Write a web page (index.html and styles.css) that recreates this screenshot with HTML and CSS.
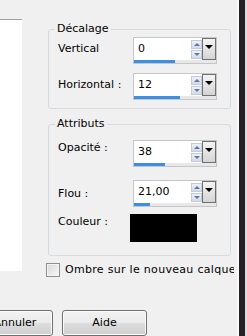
FILE: index.html
```html
<!DOCTYPE html>
<html lang="fr">
<head>
    <meta charset="UTF-8">
    <meta name="viewport" content="width=device-width, initial-scale=1.0">
    <title>Ombre portée</title>
    <link rel="stylesheet" href="styles.css">
</head>
<body>

    <div class="window">
        <div class="dialog">
            <div class="content">
                <!-- Aperçu -->
                <div class="preview"></div>

                <div class="settings">
                    <!-- Décalage -->
                    <fieldset class="group group-offset">
                        <legend>Décalage</legend>
                        <div class="row">
                            <span class="label label-mid">Vertical</span>
                            <div class="spin">
                                <div class="spin-field">
                                    <span class="spin-value">0</span>
                                    <span class="spin-arrows">
                                        <span class="arrow arrow-up"></span>
                                        <span class="arrow arrow-down"></span>
                                    </span>
                                </div>
                                <span class="spin-drop"></span>
                                <div class="spin-bar"><div class="spin-fill" style="width: 50%"></div></div>
                            </div>
                        </div>
                        <div class="row">
                            <span class="label label-mid">Horizontal :</span>
                            <div class="spin">
                                <div class="spin-field">
                                    <span class="spin-value">12</span>
                                    <span class="spin-arrows">
                                        <span class="arrow arrow-up"></span>
                                        <span class="arrow arrow-down"></span>
                                    </span>
                                </div>
                                <span class="spin-drop"></span>
                                <div class="spin-bar"><div class="spin-fill" style="width: 56%"></div></div>
                            </div>
                        </div>
                    </fieldset>

                    <!-- Attributs -->
                    <fieldset class="group group-attr">
                        <legend>Attributs</legend>
                        <div class="row">
                            <span class="label label-top">Opacité :</span>
                            <div class="spin">
                                <div class="spin-field">
                                    <span class="spin-value">38</span>
                                    <span class="spin-arrows">
                                        <span class="arrow arrow-up"></span>
                                        <span class="arrow arrow-down"></span>
                                    </span>
                                </div>
                                <span class="spin-drop"></span>
                                <div class="spin-bar"><div class="spin-fill" style="width: 38%"></div></div>
                            </div>
                        </div>
                        <div class="row row-blur">
                            <span class="label label-low">Flou :</span>
                            <div class="spin">
                                <div class="spin-field">
                                    <span class="spin-value">21,00</span>
                                    <span class="spin-arrows">
                                        <span class="arrow arrow-up"></span>
                                        <span class="arrow arrow-down"></span>
                                    </span>
                                </div>
                                <span class="spin-drop"></span>
                                <div class="spin-bar"><div class="spin-fill" style="width: 20%"></div></div>
                            </div>
                        </div>
                        <div class="row row-color">
                            <span class="label label-top">Couleur :</span>
                            <span class="swatch"></span>
                        </div>
                    </fieldset>

                    <label class="check"><span class="check-box"></span>Ombre sur le nouveau calque</label>
                </div>
            </div>

            <!-- Boutons -->
            <div class="buttons">
                <button class="btn btn-cancel">Annuler</button>
                <button class="btn">Aide</button>
            </div>
        </div>
        <div class="edge"></div>
    </div>

</body>
</html>
```

FILE: styles.css
```css
* {
    box-sizing: border-box;
}

html, body {
    margin: 0;
    height: 336px;
    overflow: hidden;
    background: #f0f0f0;
    font-family: "DejaVu Sans", sans-serif;
    font-size: 11px;
    line-height: 14px;
    color: #000;
}

.window {
    display: flex;
    height: 336px;
}

.dialog {
    width: 234px;
    flex: none;
    overflow: hidden;
}

/* Bord de la fenêtre */
.edge {
    width: 13px;
    flex: none;
    background: linear-gradient(to right, #f0f0f0 0 3px, #fbfbfb 3px 5px, #261f25 5px 11px, #dcdcdc 11px);
}

.content {
    display: flex;
    align-items: flex-start;
}

.preview {
    width: 22px;
    height: 252px;
    margin-top: 19px;
    flex: none;
    background: #fff;
    border-top: 1px solid #a0a0a0;
}

.settings {
    width: 183px;
    flex: none;
    margin-left: 26px;
    padding-top: 22px;
}

/* Cadres */
.group {
    margin: 0;
    border: 1px solid #d5dbe0;
    border-radius: 3px;
    padding: 1px 0 8px 9px;
}

.group legend {
    padding: 0 2px;
    margin-left: -3px;
}

.group-attr {
    margin-top: 8px;
    padding: 9px 0 13px 9px;
}

.row {
    display: flex;
    align-items: flex-start;
}

.row + .row {
    margin-top: 9px;
}

.group-attr .row-blur {
    margin-top: 13px;
}

.group-attr .row-color {
    margin-top: 7px;
}

.label {
    width: 75px;
    flex: none;
    white-space: nowrap;
}

.label-top { padding-top: 1px; }
.label-mid { padding-top: 5px; }
.label-low { padding-top: 7px; }

/* Champ numérique */
.spin {
    width: 84px;
    height: 27px;
    border: 1px solid #c3c7cb;
    background: #fff;
    display: grid;
    grid-template-columns: 1fr 14px;
    grid-template-rows: 22px 3px;
}

.spin-field {
    display: flex;
    align-items: center;
    justify-content: space-between;
    padding: 0 0 0 4px;
}

.spin-arrows {
    display: flex;
    flex-direction: column;
    gap: 1px;
    width: 11px;
}

.arrow {
    height: 9px;
    display: flex;
    align-items: center;
    justify-content: center;
    background: linear-gradient(#eef2f8, #d3dbe9);
    border: 1px solid #c2cbdb;
}

.arrow::after {
    content: "";
    border-left: 3px solid transparent;
    border-right: 3px solid transparent;
}

.arrow-up::after {
    border-bottom: 3px solid #65779b;
}

.arrow-down::after {
    border-top: 3px solid #65779b;
}

.spin-drop {
    display: flex;
    justify-content: center;
    padding-top: 6px;
    border: 1px solid #707070;
    background: linear-gradient(#f4f4f4, #d4d4d4);
}

.spin-drop::after {
    content: "";
    border-left: 4px solid transparent;
    border-right: 4px solid transparent;
    border-top: 4px solid #000;
    height: 0;
}

.spin-bar {
    grid-column: 1 / -1;
    background: #e8e8e8;
}

.spin-fill {
    height: 100%;
    background: #3c8fe1;
}

.swatch {
    width: 67px;
    height: 28px;
    margin-left: -3px;
    background: #000;
}

/* Case à cocher */
.check {
    display: flex;
    align-items: center;
    gap: 5px;
    margin: 7px 0 0 -2px;
    white-space: nowrap;
    letter-spacing: 0.3px;
}

.check-box {
    width: 14px;
    height: 14px;
    flex: none;
    border: 1px solid #8f8f8f;
    background: linear-gradient(135deg, #d8d8d8, #f8f8f8);
    box-shadow: inset 0 0 0 1px #f4f4f4;
}

/* Boutons */
.buttons {
    display: flex;
    gap: 9px;
    margin: 33px 0 0 -23px;
}

.btn {
    width: 85px;
    height: 26px;
    padding: 0;
    font: inherit;
    color: #000;
    border: 1px solid #707070;
    border-radius: 3px;
    background: linear-gradient(#f2f2f2 0, #ebebeb 50%, #dddddd 50%, #cfcfcf 100%);
    box-shadow: inset 0 0 0 1px #fcfcfc;
}

.btn-cancel {
    width: 76px;
}
```
